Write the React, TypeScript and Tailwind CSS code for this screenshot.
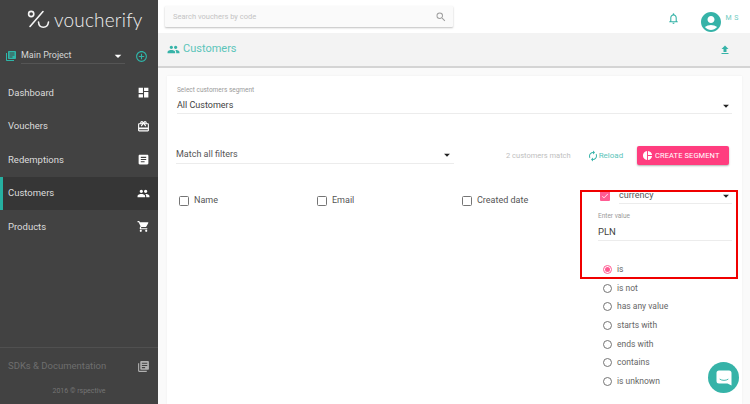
import React from "react";
import {
  MdDashboard, MdRedeem, MdPeople, MdShoppingCart, MdLibraryBooks, MdNotificationsNone,
  MdAccountCircle, MdFileUpload, MdAutorenew, MdPieChart, MdSearch, MdAddCircleOutline,
  MdArrowDropDown, MdArticle, MdCheck,
} from "react-icons/md";

const nav = [
  { label: "Dashboard", Icon: MdDashboard },
  { label: "Vouchers", Icon: MdRedeem },
  { label: "Redemptions", Icon: MdArticle },
  { label: "Customers", Icon: MdPeople, active: true },
  { label: "Products", Icon: MdShoppingCart },
];

const radios = ["is", "is not", "has any value", "starts with", "ends with", "contains", "is unknown"];

function Box() {
  return <span className="block w-[10px] h-[10px] border border-[#757575] rounded-[1.5px] shrink-0" />;
}

function Logo() {
  return (
    <div className="h-[44px] pt-[9px] pl-[27px] flex items-start">
      <svg width="24" height="19" viewBox="0 0 24 19" fill="none" stroke="#f5f5f5" strokeWidth="1.6" strokeLinecap="round" className="mt-[1px]">
        <circle cx="4.2" cy="4" r="2.6" />
        <path d="M16 1.5 L3 16.5" />
        <path d="M11.5 12 C12 19 20.5 19 21.5 12" />
      </svg>
      <span className="ml-[3px] text-[19px] leading-[22px] font-light tracking-[0.2px] text-[#f0f0f0] font-['Lato',sans-serif]">voucherify</span>
    </div>
  );
}

export default function App() {
  return (
    <div className="relative w-[750px] h-[404px] overflow-hidden flex bg-[#fafafa] font-['Roboto',sans-serif]">
      <aside className="w-[158px] h-full shrink-0 bg-[#424242] flex flex-col">
        <Logo />
        <div className="h-[32px] flex items-start pt-[5px] pl-[5px]">
          <MdLibraryBooks className="text-[#2fb5a8] w-[12px] h-[12px] mt-[1px]" />
          <div className="ml-[4px] w-[104px] h-[15px] border-b border-[#555] flex items-center justify-between text-[#d6d6d6] text-[9px]">
            <span>Main Project</span>
            <MdArrowDropDown className="w-[16px] h-[16px] text-white mr-[-1px]" />
          </div>
          <MdAddCircleOutline className="text-[#2fb5a8] w-[13px] h-[13px] ml-[10px] mt-[1px]" />
        </div>
        <nav className="flex flex-col">
          {nav.map(({ label, Icon, active }) => (
            <div
              key={label}
              className={
                active
                  ? "h-[33.5px] flex items-center justify-between pl-[5px] pr-[8px] bg-[#363636] border-l-[3px] border-[#26b0a1]"
                  : "h-[33.5px] flex items-center justify-between pl-[8px] pr-[8px] "
              }
            >
              <span className="text-[9.5px] text-[#dcdcdc]">{label}</span>
              <Icon className="w-[13px] h-[13px] text-white" />
            </div>
          ))}
        </nav>
        <div className="mt-auto border-t border-[#505050] h-[57px] flex flex-col">
          <div className="h-[38px] pl-[8px] pr-[8px] pt-[12px] flex items-start justify-between">
            <span className="text-[9.5px] leading-[12px] text-[#6e6e6e]">SDKs &amp; Documentation</span>
            <MdLibraryBooks className="w-[13px] h-[13px] text-[#b0b0b0]" />
          </div>
          <div className="text-center text-[7px] text-[#757575]">2016 © rspective</div>
        </div>
      </aside>

      <div className="w-[8px] h-full bg-[#f7f7f7] shrink-0 hidden" />

      <main className="flex-1 flex flex-col min-w-0">
        <header className="h-[33px] bg-white flex items-start shrink-0 pl-[7px]">
          <div className="mt-[6px] w-[288px] h-[21px] bg-[#fafafa] rounded-[1px] shadow-[0_1px_2px_rgba(0,0,0,0.25)] flex items-center justify-between pl-[8px] pr-[6px]">
            <span className="text-[7.5px] text-[#c4c4c4]">Search vouchers by code</span>
            <MdSearch className="w-[12px] h-[12px] text-[#9e9e9e]" />
          </div>
          <div className="ml-auto flex items-center mt-[6px] pr-[11px]">
            <MdNotificationsNone className="w-[13px] h-[13px] text-[#36b3a8]" />
            <MdAccountCircle className="w-[24px] h-[24px] text-[#36b3a8] ml-[19px] mt-[4px] mb-[-4px]" />
            <span className="text-[7px] text-[#6fcbc2] ml-[2px] tracking-[0.5px] mt-[1px]">M S</span>
          </div>
        </header>

        <div className="h-[35px] bg-[#f3f3f3] border-b-2 border-[#d4d4d4] flex items-center justify-between shrink-0 pl-[9px] pr-[19px]">
          <div className="flex items-center gap-[3px]">
            <MdPeople className="w-[13px] h-[13px] text-[#36b3a8]" />
            <span className="text-[11px] text-[#5cc5ba]">Customers</span>
          </div>
          <MdFileUpload className="w-[12px] h-[12px] text-[#36b3a8]" />
        </div>

        <section className="relative flex-1 ml-[9px] mr-[8px] mt-[8px] bg-white shadow-[0_0_2px_rgba(0,0,0,0.06)]">
          <div className="pt-[10px] px-[10px]">
            <div className="text-[6.5px] leading-[9px] text-[#9a9a9a]">Select customers segment</div>
            <div className="mt-[3px] h-[16px] border-b border-[#ececec] flex items-center justify-between text-[9px] text-[#424242]">
              <span>All Customers</span>
              <MdArrowDropDown className="w-[14px] h-[14px] text-[#222] mr-[-1px]" />
            </div>
          </div>

          <div className="mt-[31px] pl-[9px] pr-[13px] flex items-center h-[21px]">
            <div className="w-[278px] h-[17px] border-b border-[#ececec] flex items-center justify-between text-[9px] text-[#555]">
              <span>Match all filters</span>
              <MdArrowDropDown className="w-[14px] h-[14px] text-[#222] mr-[0px]" />
            </div>
            <span className="ml-[52px] text-[7.5px] text-[#c0c0c0]">2 customers match</span>
            <MdAutorenew className="ml-[16px] w-[12px] h-[12px] text-[#36b3a8]" />
            <span className="text-[8px] text-[#5cc5ba]">Reload</span>
            <div className="ml-auto w-[92px] h-[19px] rounded-[2px] bg-[#ff3d7f] shadow-[0_1px_2px_rgba(0,0,0,0.3)] flex items-center pl-[5px] gap-[2px]">
              <MdPieChart className="w-[11px] h-[11px] text-white" />
              <span className="text-[7.5px] text-white tracking-[0.1px]">CREATE SEGMENT</span>
            </div>
          </div>

          <div className="flex items-start pl-[12px] pr-[10px] mt-[23px] text-[9px] text-[#555]">
            <div className="w-[138px] flex items-center gap-[5px] h-[16px] mt-[4px]"><Box /><span>Name</span></div>
            <div className="w-[145px] flex items-center gap-[5px] h-[16px] mt-[4px]"><Box /><span>Email</span></div>
            <div className="w-[136px] flex items-center gap-[5px] h-[16px] mt-[4px]"><Box /><span>Created date</span></div>
            <div className="flex-1 flex flex-col">
              <div className="flex items-center h-[16px] -mt-[1px]">
                <span className="w-[10px] h-[10px] ml-[2px] rounded-[1px] bg-[#ff5c93] flex items-center justify-center shrink-0">
                  <MdCheck className="w-[8px] h-[8px] text-white" />
                </span>
                <div className="ml-[9px] flex-1 h-[15px] border-b border-[#ececec] flex items-center justify-between">
                  <span>currency</span>
                  <MdArrowDropDown className="w-[14px] h-[14px] text-[#222] mr-[-1px]" />
                </div>
              </div>
              <div className="text-[6.5px] leading-[9px] text-[#9a9a9a] mt-[8px]">Enter value</div>
              <div className="mt-[3px] h-[17px] border-b border-[#ececec] text-[9.5px] text-[#424242] flex items-center">PLN</div>
              <div className="mt-[19px] pl-[5px] flex flex-col">
                {radios.map((r, i) => (
                  <div key={r} className="h-[18.7px] flex items-center gap-[5px] text-[8.5px] text-[#666]">
                    {i === 0 ? (
                      <span className="w-[9px] h-[9px] rounded-full border border-[#ff5c93] flex items-center justify-center">
                        <span className="w-[5px] h-[5px] rounded-full bg-[#ff5c93]" />
                      </span>
                    ) : (
                      <span className="w-[9px] h-[9px] rounded-full border border-[#757575]" />
                    )}
                    <span>{r}</span>
                  </div>
                ))}
              </div>
            </div>
          </div>
        </section>
      </main>

      <div className="absolute left-[580px] top-[190px] w-[158px] h-[89px] border-2 border-[#f00000]" />

      <div className="absolute left-[708px] top-[362px] w-[31px] h-[31px] rounded-full bg-[#36b3a8] flex items-center justify-center">
        <svg width="16" height="16" viewBox="0 0 16 16">
          <path d="M3 0.5 H13 A2.5 2.5 0 0 1 15.5 3 V15.5 L11.5 13.5 H3 A2.5 2.5 0 0 1 0.5 11 V3 A2.5 2.5 0 0 1 3 0.5 Z" fill="#ffffff" />
          <path d="M4 9.3 C6 10.8 10 10.8 12 9.3" stroke="#36b3a8" strokeWidth="0.9" fill="none" strokeLinecap="round" />
        </svg>
      </div>
    </div>
  );
}
